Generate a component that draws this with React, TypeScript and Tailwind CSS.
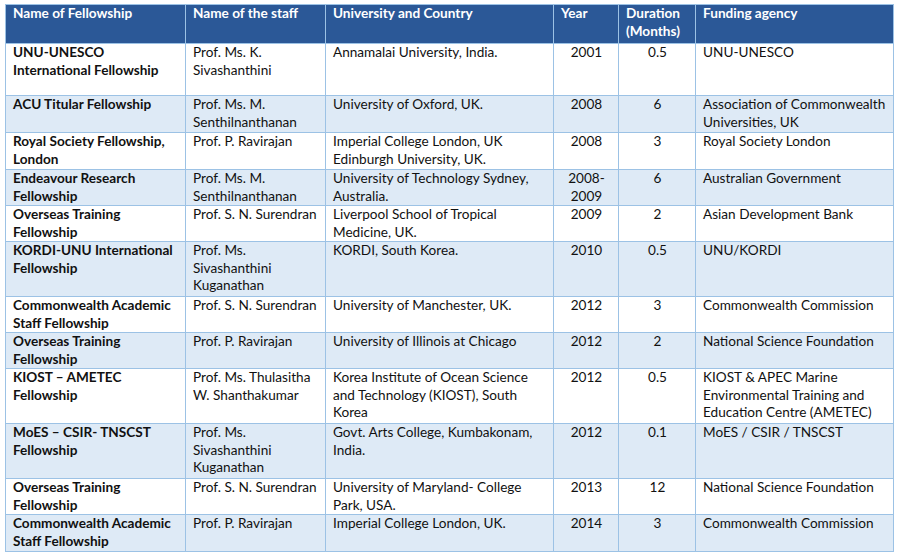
type Row = {
  name: string[];
  staff: string[];
  uni: string[];
  year: string[];
  dur: string;
  agency: string[];
  h: string;
};

const rows: Row[] = [
  { name: ["UNU-UNESCO", "International Fellowship"], staff: ["Prof. Ms. K.", "Sivashanthini"], uni: ["Annamalai University, India."], year: ["2001"], dur: "0.5", agency: ["UNU-UNESCO"], h: "h-[52px]" },
  { name: ["ACU Titular Fellowship"], staff: ["Prof. Ms. M.", "Senthilnanthanan"], uni: ["University of Oxford, UK."], year: ["2008"], dur: "6", agency: ["Association of Commonwealth", "Universities, UK"], h: "h-[37px]" },
  { name: ["Royal Society Fellowship,", "London"], staff: ["Prof. P. Ravirajan"], uni: ["Imperial College London, UK", "Edinburgh University, UK."], year: ["2008"], dur: "3", agency: ["Royal Society London"], h: "h-[37px]" },
  { name: ["Endeavour Research", "Fellowship"], staff: ["Prof. Ms. M.", "Senthilnanthanan"], uni: ["University of Technology Sydney,", "Australia."], year: ["2008-", "2009"], dur: "6", agency: ["Australian Government"], h: "h-[36px]" },
  { name: ["Overseas Training", "Fellowship"], staff: ["Prof. S. N. Surendran"], uni: ["Liverpool School of Tropical", "Medicine, UK."], year: ["2009"], dur: "2", agency: ["Asian Development Bank"], h: "h-[36px]" },
  { name: ["KORDI-UNU International", "Fellowship"], staff: ["Prof. Ms.", "Sivashanthini", "Kuganathan"], uni: ["KORDI, South Korea."], year: ["2010"], dur: "0.5", agency: ["UNU/KORDI"], h: "h-[55px]" },
  { name: ["Commonwealth Academic", "Staff Fellowship"], staff: ["Prof. S. N. Surendran"], uni: ["University of Manchester, UK."], year: ["2012"], dur: "3", agency: ["Commonwealth Commission"], h: "h-[36px]" },
  { name: ["Overseas Training", "Fellowship"], staff: ["Prof. P. Ravirajan"], uni: ["University of Illinois at Chicago"], year: ["2012"], dur: "2", agency: ["National Science Foundation"], h: "h-[36px]" },
  { name: ["KIOST – AMETEC", "Fellowship"], staff: ["Prof. Ms. Thulasitha", "W. Shanthakumar"], uni: ["Korea Institute of Ocean Science", "and Technology (KIOST), South", "Korea"], year: ["2012"], dur: "0.5", agency: ["KIOST & APEC Marine", "Environmental Training and", "Education Centre (AMETEC)"], h: "h-[55px]" },
  { name: ["MoES – CSIR- TNSCST", "Fellowship"], staff: ["Prof. Ms.", "Sivashanthini", "Kuganathan"], uni: ["Govt. Arts College, Kumbakonam,", "India."], year: ["2012"], dur: "0.1", agency: ["MoES / CSIR / TNSCST"], h: "h-[55px]" },
  { name: ["Overseas Training", "Fellowship"], staff: ["Prof. S. N. Surendran"], uni: ["University of Maryland- College", "Park, USA."], year: ["2013"], dur: "12", agency: ["National Science Foundation"], h: "h-[36px]" },
  { name: ["Commonwealth Academic", "Staff Fellowship"], staff: ["Prof. P. Ravirajan"], uni: ["Imperial College London, UK."], year: ["2014"], dur: "3", agency: ["Commonwealth Commission"], h: "h-[37px]" },
];

const Lines = ({ lines }: { lines: string[] }) => (
  <>
    {lines.map((l, i) => (
      <div key={i} className="whitespace-nowrap">{l}</div>
    ))}
  </>
);

const cell = "border border-[#9cc2e5] align-top p-0 pl-[7px] pr-[6px]";

export default function App() {
  return (
    <div className="bg-white w-[899px] h-[553px] pl-[5px] pt-[4px] overflow-hidden">
      <table
        className="table-fixed border-collapse w-[888px] text-[13.6px] leading-[17.5px] text-[#111]"
        style={{ fontFamily: "Lato, 'Open Sans', sans-serif" }}
      >
        <colgroup>
          <col className="w-[180px]" />
          <col className="w-[140px]" />
          <col className="w-[228px]" />
          <col className="w-[65px]" />
          <col className="w-[77px]" />
          <col className="w-[198px]" />
        </colgroup>
        <thead>
          <tr className="h-[39px] bg-[#2b5897] text-white font-bold">
            <th className={`${cell} text-left`}>Name of Fellowship</th>
            <th className={`${cell} text-left`}>Name of the staff</th>
            <th className={`${cell} text-left`}>University and Country</th>
            <th className={`${cell} text-left`}>Year</th>
            <th className={`${cell} text-left`}>
              <Lines lines={["Duration", "(Months)"]} />
            </th>
            <th className={`${cell} text-left`}>Funding agency</th>
          </tr>
        </thead>
        <tbody>
          {rows.map((r, i) => (
            <tr key={i} className={`${r.h} ${i % 2 === 1 ? "bg-[#deeaf6]" : "bg-white"}`}>
              <td className={`${cell} font-bold`}>
                <Lines lines={r.name} />
              </td>
              <td className={cell}>
                <Lines lines={r.staff} />
              </td>
              <td className={cell}>
                <Lines lines={r.uni} />
              </td>
              <td className={`${cell} text-center`}>
                <Lines lines={r.year} />
              </td>
              <td className={`${cell} text-center`}>{r.dur}</td>
              <td className={cell}>
                <Lines lines={r.agency} />
              </td>
            </tr>
          ))}
        </tbody>
      </table>
    </div>
  );
}
